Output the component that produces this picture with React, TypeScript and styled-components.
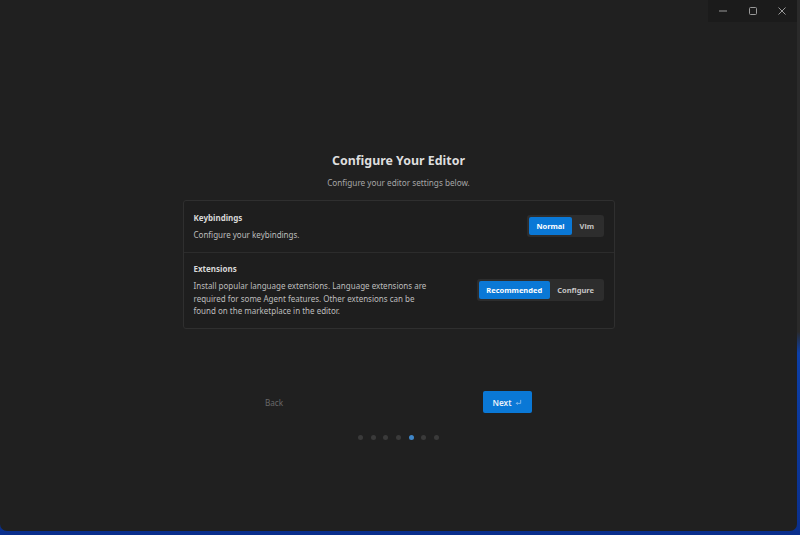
import React from 'react'
import styled, { createGlobalStyle } from 'styled-components'

const GlobalStyle = createGlobalStyle`
  html, body {
    margin: 0;
    padding: 0;
    width: 800px;
    height: 535px;
    overflow: hidden;
    background: linear-gradient(180deg, #2a2a2a 0%, #2a2a2a 62%, #0c3fa8 66%, #0a2f8c 100%);
    font-family: 'Noto Sans', 'Open Sans', sans-serif;
  }
  #root {
    width: 800px;
    height: 535px;
  }
`

const Window = styled.div`
  width: 797px;
  height: 531px;
  background-color: #202020;
  border-bottom-left-radius: 7px;
  border-bottom-right-radius: 7px;
  display: flex;
  flex-direction: column;
  align-items: center;
  color: #d6d6d6;
`

const TitleBar = styled.div`
  align-self: stretch;
  height: 22px;
  display: flex;
  justify-content: flex-end;
`

const Controls = styled.div`
  width: 89px;
  background-color: #1b1b1b;
  display: flex;
`

const ControlButton = styled.div`
  flex: 1;
  display: flex;
  align-items: center;
  justify-content: center;
  color: #9a9a9a;
`

const Title = styled.h1`
  margin: 130px 0 0;
  font-size: 12.4px;
  line-height: 18px;
  font-weight: 700;
  color: #dedede;
`

const Subtitle = styled.p`
  margin: 7px 0 0;
  font-size: 8.2px;
  line-height: 12px;
  color: #a6a6a6;
`

const Card = styled.div`
  margin-top: 11px;
  width: 430px;
  border: 1px solid #2f2f2f;
  border-radius: 3px;
  background-color: #1e1e1e;
`

const Row = styled.div<{ $divider?: boolean }>`
  display: flex;
  align-items: center;
  justify-content: space-between;
  padding: 10.5px 10px;
  border-top: ${p => (p.$divider ? '1px solid #2c2c2c' : 'none')};
`

const RowText = styled.div`
  display: flex;
  flex-direction: column;
  gap: 5px;
  max-width: 240px;
`

const RowTitle = styled.div`
  font-size: 8px;
  line-height: 12px;
  font-weight: 700;
  color: #d8d8d8;
`

const RowDesc = styled.div`
  font-size: 8px;
  line-height: 12.5px;
  color: #bdbdbd;
`

const Segmented = styled.div`
  display: flex;
  padding: 2px;
  border-radius: 3px;
  background-color: #2d2d2d;
`

const Segment = styled.div<{ $active?: boolean }>`
  height: 18px;
  padding: 0 7.5px;
  display: flex;
  align-items: center;
  border-radius: 2px;
  font-size: 7.5px;
  font-weight: 700;
  color: ${p => (p.$active ? '#ffffff' : '#c4c4c4')};
  background-color: ${p => (p.$active ? '#0a78d6' : 'transparent')};
`

const NavRow = styled.div`
  margin-top: 62px;
  margin-left: -16px;
  width: 282px;
  display: flex;
  align-items: center;
  justify-content: space-between;
`

const BackButton = styled.div`
  width: 49px;
  text-align: center;
  font-size: 8.2px;
  color: #686868;
`

const NextButton = styled.div`
  width: 49px;
  height: 22px;
  border-radius: 2px;
  background-color: #0a78d6;
  display: flex;
  align-items: center;
  justify-content: center;
  gap: 3px;
  font-size: 8.2px;
  font-weight: 600;
  color: #e8f1fb;
`

const Dots = styled.div`
  margin-top: 22px;
  display: flex;
  gap: 7.7px;
`

const Dot = styled.div<{ $active?: boolean }>`
  width: 5px;
  height: 5px;
  border-radius: 50%;
  background-color: ${p => (p.$active ? '#3f86c8' : '#3a3a3a')};
`

const App: React.FC = () => {
  const steps = [0, 1, 2, 3, 4, 5, 6]
  const current = 4

  return (
    <>
      <GlobalStyle />
      <Window>
        <TitleBar>
          <Controls>
            <ControlButton>
              <svg width="10" height="10" viewBox="0 0 10 10">
                <path d="M1 5h8" stroke="currentColor" strokeWidth="1" />
              </svg>
            </ControlButton>
            <ControlButton>
              <svg width="10" height="10" viewBox="0 0 10 10">
                <rect x="1.5" y="1.5" width="7" height="7" rx="1" fill="none" stroke="currentColor" strokeWidth="1" />
              </svg>
            </ControlButton>
            <ControlButton>
              <svg width="10" height="10" viewBox="0 0 10 10">
                <path d="M1.5 1.5l7 7M8.5 1.5l-7 7" stroke="currentColor" strokeWidth="1" />
              </svg>
            </ControlButton>
          </Controls>
        </TitleBar>

        <Title>Configure Your Editor</Title>
        <Subtitle>Configure your editor settings below.</Subtitle>

        <Card>
          <Row>
            <RowText>
              <RowTitle>Keybindings</RowTitle>
              <RowDesc>Configure your keybindings.</RowDesc>
            </RowText>
            <Segmented>
              <Segment $active>Normal</Segment>
              <Segment>Vim</Segment>
            </Segmented>
          </Row>
          <Row $divider>
            <RowText>
              <RowTitle>Extensions</RowTitle>
              <RowDesc>
                Install popular language extensions. Language extensions are required for some Agent
                features. Other extensions can be found on the marketplace in the editor.
              </RowDesc>
            </RowText>
            <Segmented>
              <Segment $active>Recommended</Segment>
              <Segment>Configure</Segment>
            </Segmented>
          </Row>
        </Card>

        <NavRow>
          <BackButton>Back</BackButton>
          <NextButton>
            Next
            <svg width="7" height="7" viewBox="0 0 8 8">
              <path d="M6.5 1v4H1.5M3 3.5L1.5 5 3 6.5" fill="none" stroke="#9cc6ee" strokeWidth="0.9" />
            </svg>
          </NextButton>
        </NavRow>

        <Dots>
          {steps.map(s => (
            <Dot key={s} $active={s === current} />
          ))}
        </Dots>
      </Window>
    </>
  )
}

export default App
